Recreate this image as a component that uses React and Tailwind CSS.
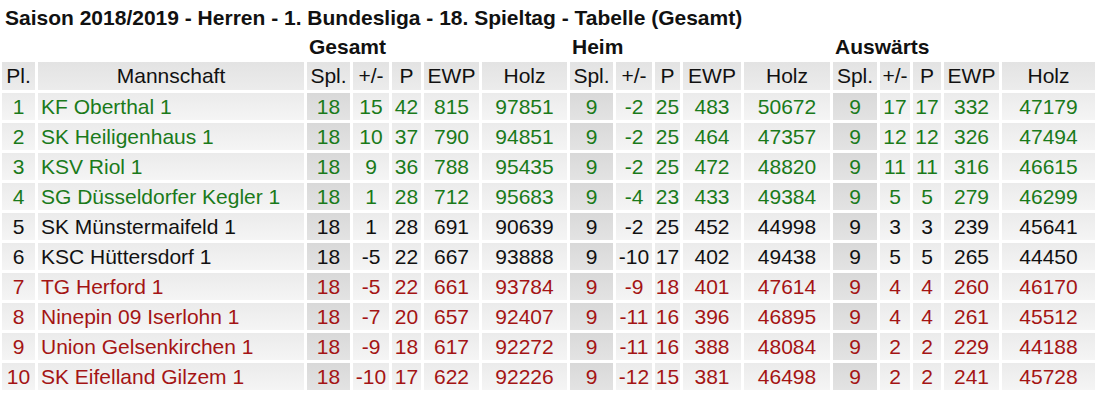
const widths = [33, 266, 43, 36, 29, 55, 85, 43, 36, 25, 58, 86, 44, 30, 28, 55, 93];

const heads = ['Pl.', 'Mannschaft', 'Spl.', '+/-', 'P', 'EWP', 'Holz', 'Spl.', '+/-', 'P', 'EWP', 'Holz', 'Spl.', '+/-', 'P', 'EWP', 'Holz'];

const rows = [
  [1, 'KF Oberthal 1', 18, 15, 42, 815, 97851, 9, -2, 25, 483, 50672, 9, 17, 17, 332, 47179],
  [2, 'SK Heiligenhaus 1', 18, 10, 37, 790, 94851, 9, -2, 25, 464, 47357, 9, 12, 12, 326, 47494],
  [3, 'KSV Riol 1', 18, 9, 36, 788, 95435, 9, -2, 25, 472, 48820, 9, 11, 11, 316, 46615],
  [4, 'SG Düsseldorfer Kegler 1', 18, 1, 28, 712, 95683, 9, -4, 23, 433, 49384, 9, 5, 5, 279, 46299],
  [5, 'SK Münstermaifeld 1', 18, 1, 28, 691, 90639, 9, -2, 25, 452, 44998, 9, 3, 3, 239, 45641],
  [6, 'KSC Hüttersdorf 1', 18, -5, 22, 667, 93888, 9, -10, 17, 402, 49438, 9, 5, 5, 265, 44450],
  [7, 'TG Herford 1', 18, -5, 22, 661, 93784, 9, -9, 18, 401, 47614, 9, 4, 4, 260, 46170],
  [8, 'Ninepin 09 Iserlohn 1', 18, -7, 20, 657, 92407, 9, -11, 16, 396, 46895, 9, 4, 4, 261, 45512],
  [9, 'Union Gelsenkirchen 1', 18, -9, 18, 617, 92272, 9, -11, 16, 388, 48084, 9, 2, 2, 229, 44188],
  [10, 'SK Eifelland Gilzem 1', 18, -10, 17, 622, 92226, 9, -12, 15, 381, 46498, 9, 2, 2, 241, 45728],
];

// Spl. columns have the darker cell
const splCols = [2, 7, 12];

const rowColor = (pl) => {
  if (pl <= 4) return 'text-[#1a7a1a]';
  if (pl >= 7) return 'text-[#a41414]';
  return 'text-[#111]';
};

export default function App() {
  return (
    <div className="w-[1104px] h-[403px] bg-white text-[#111] overflow-hidden" style={{ fontFamily: '"Liberation Sans", Arial, sans-serif' }}>
      <div className="pl-[5px] pt-[6px] h-[32px] text-[21px] leading-[24px] font-bold">
        Saison 2018/2019 - Herren - 1. Bundesliga - 18. Spieltag - Tabelle (Gesamt)
      </div>
      <table className="-ml-px table-fixed border-separate border-spacing-[3px] text-[21px]">
        <colgroup>
          {widths.map((w, i) => (
            <col key={i} style={{ width: w }} />
          ))}
        </colgroup>
        <thead>
          <tr className="h-[24px] leading-[24px] font-bold">
            <th colSpan={2}></th>
            <th colSpan={5} className="text-left pl-[2px] font-bold">Gesamt</th>
            <th colSpan={5} className="text-left pl-[2px] font-bold">Heim</th>
            <th colSpan={5} className="text-left pl-[2px] font-bold">Auswärts</th>
          </tr>
          <tr className="h-[28px] leading-[28px]">
            {heads.map((h, i) => (
              <th key={i} className="p-0 font-normal text-center bg-linear-to-b from-[#e3e3e3] to-[#ececec] whitespace-nowrap">
                {h}
              </th>
            ))}
          </tr>
        </thead>
        <tbody>
          {rows.map((r) => (
            <tr key={r[0]} className={`h-[27px] leading-[27px] ${rowColor(r[0])}`}>
              {r.map((v, i) => (
                <td
                  key={i}
                  className={`p-0 whitespace-nowrap ${i === 1 ? 'text-left pl-[3px]' : 'text-center'} ${
                    splCols.includes(i)
                      ? 'bg-linear-to-b from-[#d9d9d9] to-[#e3e3e3]'
                      : 'bg-linear-to-b from-[#ebebeb] to-[#f5f5f5]'
                  }`}
                >
                  {v}
                </td>
              ))}
            </tr>
          ))}
        </tbody>
      </table>
    </div>
  );
}
